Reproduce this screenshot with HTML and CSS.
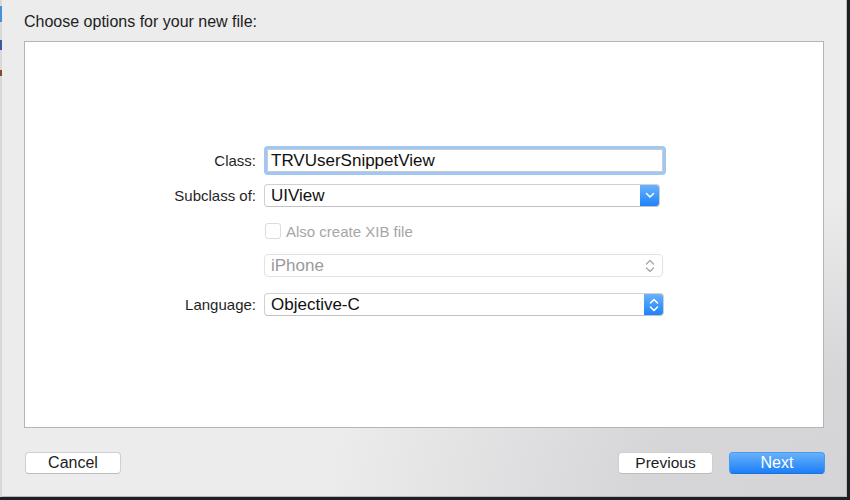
FILE: index.html
```html
<!DOCTYPE html>
<html>
<head>
<meta charset="utf-8">
<link rel="stylesheet" href="styles.css">
</head>
<body>
<div class="screen">
  <div class="edge-left"></div>
  <div class="sheet">
    <div class="title">Choose options for your new file:</div>
    <div class="panel">
      <div class="form">
        <div class="row row-class">
          <div class="label">Class:</div>
          <div class="textfield">TRVUserSnippetView</div>
        </div>
        <div class="row row-sub">
          <div class="label">Subclass of:</div>
          <div class="popup popup-sub">
            <span class="popup-text">UIView</span>
            <span class="popup-btn">
              <svg width="10" height="7" viewBox="0 0 10 7"><path d="M1.5 1.5 L5 5 L8.5 1.5" fill="none" stroke="#fff" stroke-width="1.6" stroke-linecap="round" stroke-linejoin="round"/></svg>
            </span>
          </div>
        </div>
        <div class="row row-check">
          <div class="label"></div>
          <div class="check">
            <span class="box"></span>
            <span class="check-text">Also create XIB file</span>
          </div>
        </div>
        <div class="row row-device">
          <div class="label"></div>
          <div class="popup popup-disabled">
            <span class="popup-text">iPhone</span>
            <span class="popup-arrows">
              <svg width="10" height="16" viewBox="0 0 10 16"><path d="M1.5 6 L5 2.5 L8.5 6 M1.5 10 L5 13.5 L8.5 10" fill="none" stroke="#a8a8a8" stroke-width="1.4" stroke-linecap="round" stroke-linejoin="round"/></svg>
            </span>
          </div>
        </div>
        <div class="row row-lang">
          <div class="label">Language:</div>
          <div class="popup popup-lang">
            <span class="popup-text">Objective-C</span>
            <span class="popup-btn">
              <svg width="10" height="16" viewBox="0 0 10 16"><path d="M1.5 6 L5 2.5 L8.5 6 M1.5 10 L5 13.5 L8.5 10" fill="none" stroke="#fff" stroke-width="1.6" stroke-linecap="round" stroke-linejoin="round"/></svg>
            </span>
          </div>
        </div>
      </div>
    </div>
    <div class="footer">
      <button class="btn">Cancel</button>
      <div class="spacer"></div>
      <button class="btn btn-prev">Previous</button>
      <button class="btn btn-primary">Next</button>
    </div>
  </div>
  <div class="edge-right"></div>
</div>
</body>
</html>
```
FILE: styles.css
```css
* { box-sizing: border-box; }
html, body { margin: 0; padding: 0; }
body {
  width: 850px;
  height: 500px;
  overflow: hidden;
  background: #1f2024;
  font-family: "Liberation Sans", Arial, sans-serif;
  color: #222;
}
.screen {
  display: flex;
  width: 850px;
  height: 500px;
}
.edge-left {
  width: 2px;
  height: 497px;
  background: linear-gradient(to bottom, #d8d8d8 0, #d8d8d8 6px, #4a90d9 6px, #4a90d9 22px, #d8d8d8 22px, #d8d8d8 40px, #3a5a9a 40px, #3a5a9a 50px, #d8d8d8 50px, #d8d8d8 70px, #8a4a2a 70px, #8a4a2a 76px, #d8d8d8 76px);
}
.edge-right {
  width: 3px;
  height: 500px;
  background: #1e1f24;
}
.sheet {
  width: 845px;
  height: 497px;
  display: flex;
  flex-direction: column;
  padding: 12px 0 0 22px;
  background:
    radial-gradient(ellipse 520px 300px at 100% 100%, #d5d5d8 0%, #d6d6d9 40%, rgba(214,214,217,0) 100%),
    #ececec;
  border-right: 1px solid #bdbdc0;
  border-bottom: 1px solid #b8b8b8;
}
.title {
  font-size: 16px;
  line-height: 19px;
  height: 29px;
  color: #1d1d1d;
}
.panel {
  width: 800px;
  height: 387px;
  background: #fff;
  border: 1px solid #b4b4b4;
}
.form {
  padding-top: 104px;
  display: flex;
  flex-direction: column;
}
.row {
  display: flex;
  align-items: center;
}
.label {
  width: 231px;
  margin-right: 8px;
  text-align: right;
  font-size: 15px;
  color: #1f1f1f;
}
.row-class { height: 29px; }
.row-sub { height: 23px; margin-top: 9px; }
.row-check { height: 16px; margin-top: 16px; }
.row-device { height: 23px; margin-top: 15px; }
.row-lang { height: 23px; margin-top: 16px; }

.textfield {
  width: 402px;
  height: 29px;
  border: 3px solid #a1c7f4;
  border-radius: 4px;
  box-shadow: inset 0 0 0 1px #c9c9c9;
  padding-left: 4px;
  font-size: 17px;
  line-height: 23px;
  color: #111;
}
.popup {
  height: 23px;
  display: flex;
  align-items: stretch;
  border: 1px solid #d0d0d0;
  border-bottom-color: #c2c2c2;
  border-radius: 4px;
  background: #fff;
  overflow: hidden;
}
.popup-sub { width: 396px; }
.popup-disabled { width: 399px; border-color: #e2e2e2; }
.popup-lang { width: 400px; }
.popup-text {
  flex: 1;
  padding-left: 6px;
  font-size: 17px;
  line-height: 21px;
  color: #111;
}
.popup-disabled .popup-text { color: #9a9a9a; }
.popup-btn {
  width: 20px;
  margin: -1px -1px -1px 0;
  background: linear-gradient(to bottom, #6db4fb, #1a80fb);
  display: flex;
  align-items: center;
  justify-content: center;
}
.popup-arrows {
  width: 20px;
  display: flex;
  align-items: center;
  justify-content: center;
  padding-right: 4px;
}
.check {
  display: flex;
  align-items: center;
  padding-left: 1px;
}
.box {
  width: 16px;
  height: 16px;
  border: 1px solid #dcdcdc;
  border-radius: 3px;
  background: #fff;
}
.check-text {
  margin-left: 5px;
  font-size: 15px;
  color: #a6a6a6;
}
.footer {
  display: flex;
  align-items: center;
  margin-top: 24px;
  padding-left: 1px;
}
.spacer { flex: 1; }
.btn {
  width: 96px;
  height: 22px;
  border: 1px solid #cfcfcf;
  border-bottom-color: #bdbdbd;
  border-radius: 4px;
  background: #fff;
  font-family: "Liberation Sans", Arial, sans-serif;
  font-size: 16px;
  color: #1d1d1d;
  padding: 0;
  line-height: 20px;
}
.btn-prev { width: 95px; margin-right: 16px; font-size: 15.5px; }
.btn-primary {
  margin-right: 21px;
  border: 1px solid #4799f7;
  border-bottom-color: #1f6fdc;
  background: linear-gradient(to bottom, #69b1fa, #1b7ff8);
  color: #fff;
}
```
